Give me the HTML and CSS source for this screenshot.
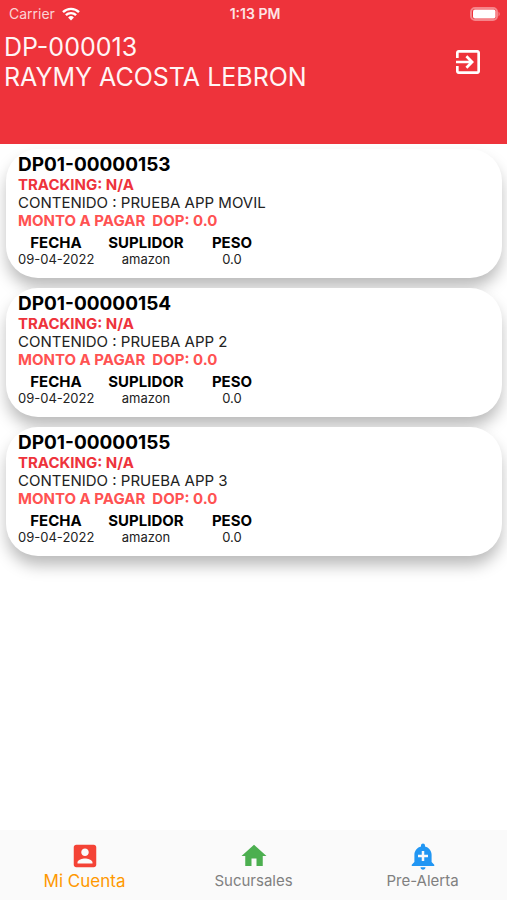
FILE: index.html
```html
<!DOCTYPE html>
<html lang="es">
	<head>
		<meta charset="utf-8">
		<meta name="viewport" content="width=device-width, initial-scale=1">
		<title>Mi Cuenta</title>
		<link rel="stylesheet" href="styles.css">
	</head>
	<body>

		<header class="encabezado">
			<div class="barraEstado">
				<div class="operador">
					<span>Carrier</span>
					<svg class="iconoWifi" viewBox="0 0 18 14">
						<path d="M1 5.2 A11.4 11.4 0 0 1 17 5.2" />
						<path d="M3.9 8.2 A7.3 7.3 0 0 1 14.1 8.2" />
						<path class="punto" d="M9 13.4 L6.1 10.5 A4.2 4.2 0 0 1 11.9 10.5 Z" />
					</svg>
				</div>
				<span class="hora">1:13 PM</span>
				<svg class="iconoBateria" viewBox="0 0 31 14">
					<rect class="borde" x="1" y="1" width="26" height="12" rx="4" />
					<rect x="3" y="2.6" width="22.5" height="8.8" rx="2" />
					<path class="polo" d="M28.5 4.5 Q31 7 28.5 9.5 Z" />
				</svg>
			</div>

			<div class="usuario">
				<h1 class="nombreUsuario">DP-000013<br>RAYMY ACOSTA LEBRON</h1>
				<button class="botonSalir" type="button" aria-label="Salir">
					<svg viewBox="0 0 24 24">
						<path d="M10.09 15.59L11.5 17l5-5-5-5-1.41 1.41L12.67 11H3v2h9.67l-2.58 2.59zM19 3H5c-1.11 0-2 .9-2 2v4h2V5h14v14H5v-4H3v4c0 1.1.89 2 2 2h14c1.1 0 2-.9 2-2V5c0-1.1-.9-2-2-2z" />
					</svg>
				</button>
			</div>
		</header>

		<main class="paquetes">

			<article class="paquete">
				<h2 class="codigo">DP01-00000153</h2>
				<p class="tracking">TRACKING: N/A</p>
				<p class="contenido">CONTENIDO : PRUEBA APP MOVIL</p>
				<p class="monto">MONTO A PAGAR&nbsp; DOP: 0.0</p>
				<table class="detalle">
					<thead>
						<tr>
							<th class="colFecha">FECHA</th>
							<th class="colSuplidor">SUPLIDOR</th>
							<th class="colPeso">PESO</th>
						</tr>
					</thead>
					<tbody>
						<tr>
							<td>09-04-2022</td>
							<td>amazon</td>
							<td>0.0</td>
						</tr>
					</tbody>
				</table>
			</article>

			<article class="paquete">
				<h2 class="codigo">DP01-00000154</h2>
				<p class="tracking">TRACKING: N/A</p>
				<p class="contenido">CONTENIDO : PRUEBA APP 2</p>
				<p class="monto">MONTO A PAGAR&nbsp; DOP: 0.0</p>
				<table class="detalle">
					<thead>
						<tr>
							<th class="colFecha">FECHA</th>
							<th class="colSuplidor">SUPLIDOR</th>
							<th class="colPeso">PESO</th>
						</tr>
					</thead>
					<tbody>
						<tr>
							<td>09-04-2022</td>
							<td>amazon</td>
							<td>0.0</td>
						</tr>
					</tbody>
				</table>
			</article>

			<article class="paquete">
				<h2 class="codigo">DP01-00000155</h2>
				<p class="tracking">TRACKING: N/A</p>
				<p class="contenido">CONTENIDO : PRUEBA APP 3</p>
				<p class="monto">MONTO A PAGAR&nbsp; DOP: 0.0</p>
				<table class="detalle">
					<thead>
						<tr>
							<th class="colFecha">FECHA</th>
							<th class="colSuplidor">SUPLIDOR</th>
							<th class="colPeso">PESO</th>
						</tr>
					</thead>
					<tbody>
						<tr>
							<td>09-04-2022</td>
							<td>amazon</td>
							<td>0.0</td>
						</tr>
					</tbody>
				</table>
			</article>

		</main>

		<nav class="navegador">
			<a class="enlace activo" href="#cuenta">
				<svg class="iconoCuenta" viewBox="0 0 24 24">
					<path d="M3 5v14c0 1.1.89 2 2 2h14c1.1 0 2-.9 2-2V5c0-1.1-.9-2-2-2H5c-1.11 0-2 .9-2 2zm12 4c0 1.66-1.34 3-3 3s-3-1.34-3-3 1.34-3 3-3 3 1.34 3 3zm-9 8c0-2 4-3.1 6-3.1s6 1.1 6 3.1v1H6v-1z" />
				</svg>
				<span>Mi Cuenta</span>
			</a>
			<a class="enlace" href="#sucursales">
				<svg class="iconoCasa" viewBox="0 0 24 24">
					<path d="M10 20v-6h4v6h5v-8h3L12 3 2 12h3v8z" />
				</svg>
				<span>Sucursales</span>
			</a>
			<a class="enlace" href="#prealerta">
				<svg class="iconoAlerta" viewBox="0 0 24 24">
					<path d="M10.01 21.01c0 1.1.89 1.99 1.99 1.99s1.99-.89 1.99-1.99h-3.98zm8.87-4.19V11c0-3.25-2.25-5.97-5.29-6.69v-.72C13.59 2.71 12.88 2 12 2s-1.59.71-1.59 1.59v.72C7.37 5.03 5.12 7.75 5.12 11v5.82L3 18.94V20h18v-1.06l-2.12-2.12zM16 13.01h-3v3h-2v-3H8V11h3V8h2v3h3v2.01z" />
				</svg>
				<span>Pre-Alerta</span>
			</a>
		</nav>

	</body>
</html>
```

FILE: styles.css
```css
body {
	margin: 0;
	min-height: 100vh;
	display: flex;
	flex-direction: column;
	background-color: white;
	color: black;
	font-family: Inter, "Liberation Sans", sans-serif;
	font-size: 15px;
	line-height: 18px;
}

h1, h2, p {
	margin: 0;
}

/* encabezado */
.encabezado {
	height: 144px;
	background-color: #ee333b;
	color: white;
}

.barraEstado {
	display: grid;
	grid-template-columns: 1fr auto 1fr;
	align-items: center;
	height: 27px;
	padding: 0 6px 0 9px;
	font-size: 14px;
}

.operador {
	display: flex;
	align-items: center;
	gap: 7px;
	color: #fbd3d5;
}

.hora {
	font-weight: 600;
	color: #fde4e5;
}

.iconoWifi {
	width: 18px;
	height: 14px;
	fill: none;
	stroke: white;
	stroke-width: 2.4;
}

.iconoWifi .punto {
	fill: white;
	stroke: none;
}

.iconoBateria {
	justify-self: end;
	width: 31px;
	height: 14px;
	fill: white;
}

.iconoBateria .borde {
	fill: none;
	stroke: #f5858a;
	stroke-width: 2;
}

.iconoBateria .polo {
	fill: #f5858a;
}

.usuario {
	display: flex;
	justify-content: space-between;
	align-items: center;
	padding: 5px 23px 0 4px;
}

.nombreUsuario {
	font-size: 25px;
	font-weight: 400;
	line-height: 30px;
	color: #fff5f5;
}

.botonSalir {
	width: 32px;
	height: 32px;
	padding: 0;
	border: none;
	background: none;
	cursor: pointer;
}

.botonSalir svg {
	display: block;
	width: 32px;
	height: 32px;
	fill: white;
}

/* lista de paquetes */
.paquetes {
	flex: 1;
	display: flex;
	flex-direction: column;
	gap: 10px;
	padding: 5px 5px 20px 6px;
	overflow: hidden;
}

.paquete {
	padding: 5px 12px 10px;
	border-radius: 32px;
	background-color: white;
	box-shadow: 0 10px 16px -1px rgba(0, 0, 0, 0.28);
}

.codigo {
	font-size: 19px;
	font-weight: 700;
	line-height: 22px;
}

.tracking {
	font-weight: 700;
	color: #ee333b;
}

.contenido {
	color: #222222;
}

.monto {
	font-weight: 700;
	color: #ff5252;
}

.detalle {
	margin-top: 4px;
	border-collapse: collapse;
	table-layout: fixed;
	width: 248px;
	line-height: 17px;
	text-align: center;
	white-space: nowrap;
}

.detalle th, .detalle td {
	padding: 0;
}

.detalle th {
	font-weight: 700;
}

.detalle td {
	font-size: 13px;
	color: #222222;
}

.colFecha {
	width: 76px;
}

.colSuplidor {
	width: 104px;
}

.colPeso {
	width: 68px;
}

/* navegador de abajo */
.navegador {
	display: flex;
	height: 70px;
	background-color: #fafafa;
}

.enlace {
	flex: 1;
	display: flex;
	flex-direction: column;
	align-items: center;
	padding-top: 11px;
	color: #808080;
	text-decoration: none;
}

.enlace svg {
	width: 30px;
	height: 30px;
}

.enlace span {
	line-height: 20px;
}

.activo {
	font-size: 17px;
	color: #ff9800;
}

.iconoCuenta {
	fill: #f44336;
}

.iconoCasa {
	fill: #4caf50;
}

.iconoAlerta {
	fill: #2196f3;
}
```
